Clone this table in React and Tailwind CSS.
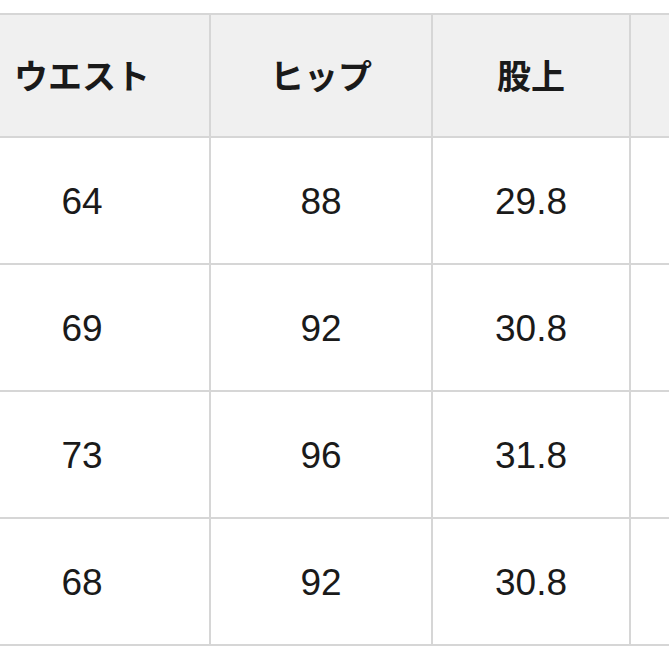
export default function App() {
  const header = ["ウエスト", "ヒップ", "股上", ""];
  const rows = [
    ["64", "88", "29.8", ""],
    ["69", "92", "30.8", ""],
    ["73", "96", "31.8", ""],
    ["68", "92", "30.8", ""],
  ];
  return (
    <div className="w-[669px] h-[669px] bg-white overflow-hidden">
      <div className="ml-[-45px] mt-[13px] w-[780px] bg-[#d6d6d6] py-[2px]">
        <div className="grid grid-cols-[254px_220px_196px_200px] gap-[2px]">
          {header.map((h, i) => (
            <div
              key={"h" + i}
              className="h-[121px] bg-[#f0f0f0] flex items-center justify-center text-[34px] font-bold text-[#1a1a1a] pb-[2px]"
              style={{ fontFamily: '"Noto Sans CJK JP", "Noto Sans", sans-serif' }}
            >
              {h}
            </div>
          ))}
          {rows.map((r, ri) =>
            r.map((c, ci) => (
              <div
                key={ri + "-" + ci}
                className="h-[125px] bg-white flex items-center justify-center text-[37px] text-[#1a1a1a] pt-[3px]"
                style={{ fontFamily: '"Liberation Sans", Arial, sans-serif' }}
              >
                {c}
              </div>
            ))
          )}
        </div>
      </div>
    </div>
  );
}
